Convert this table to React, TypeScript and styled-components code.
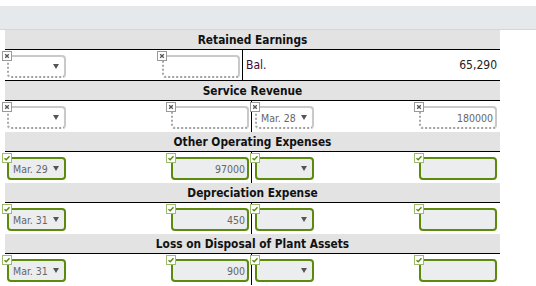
import React from "react";
import styled, { createGlobalStyle, css } from "styled-components";

const Global = createGlobalStyle`
  html, body { margin: 0; padding: 0; background: #fff; }
  body { font-family: "DejaVu Sans Condensed", "DejaVu Sans", sans-serif; }
`;

const Page = styled.div`
  width: 536px;
  height: 286px;
  overflow: hidden;
`;

const Band = styled.div`
  margin-top: 6px;
  height: 23px;
  background: #e6e9ec;
  border-bottom: 1px solid #d2d7dc;
`;

const Table = styled.div`
  margin-left: 5px;
  width: 495px;
  display: flex;
  flex-direction: column;
`;

const Header = styled.div`
  height: 19px;
  background: #e3e3e3;
  border-bottom: 1px solid #000;
  display: flex;
  align-items: center;
  justify-content: center;
  font-weight: bold;
  font-size: 11.8px;
  color: #111;
`;

const Row = styled.div<{ $leftW: number; $ruled?: boolean }>`
  display: grid;
  grid-template-columns: ${(p) => p.$leftW}px 1px 1fr;
  height: ${(p) => (p.$ruled ? 30 : 31)}px;
  ${(p) =>
    p.$ruled &&
    css`
      border-bottom: 1px solid #000;
    `}
`;

const Divider = styled.div`
  background: #000;
`;

const Cell = styled.div<{ $side: "l" | "r"; $center?: boolean }>`
  display: flex;
  justify-content: space-between;
  align-items: ${(p) => (p.$center ? "center" : "flex-start")};
  padding: ${(p) => (p.$center ? "0 2px 0 2px" : p.$side === "l" ? "5px 2px 0 2px" : "5px 3px 0 3px")};
`;

const Control = styled.div<{ $w: number; $ok: boolean; $select?: boolean }>`
  position: relative;
  box-sizing: border-box;
  width: ${(p) => p.$w}px;
  height: 23px;
  border-radius: 4px;
  display: flex;
  align-items: center;
  justify-content: ${(p) => (p.$select ? "space-between" : "flex-end")};
  padding: 0 ${(p) => (p.$select ? "5px" : "2px")} 0 4px;
  font-size: 10.5px;
  color: #666;
  ${(p) =>
    p.$ok
      ? css`
          border: 2px solid #5b8a0c;
          background: #ebedee;
        `
      : css`
          border: 2px solid #c9c9c9;
          border-left-style: dotted;
          border-bottom-style: dotted;
          border-left-color: #a8a8a8;
          border-bottom-color: #a0a0a0;
          background: #fff;
        `}
`;

const Arrow = styled.span`
  width: 0;
  height: 0;
  border-left: 3px solid transparent;
  border-right: 3px solid transparent;
  border-top: 5px solid #555;
`;

const Mark = styled.div<{ $ok: boolean }>`
  position: absolute;
  top: -6px;
  left: -7px;
  width: 10px;
  height: 10px;
  box-sizing: border-box;
  border: 1px solid ${(p) => (p.$ok ? "#9dbb6e" : "#9a9a9a")};
  background: #fff;
  display: flex;
  align-items: center;
  justify-content: center;
`;

const BalLabel = styled.span`
  font-size: 12px;
  color: #3b0a3b;
  padding-left: 1px;
`;

const BalValue = styled.span`
  font-size: 12px;
  color: #222;
  padding-right: 1px;
`;

const MarkIcon = ({ ok }: { ok: boolean }) => (
  <Mark $ok={ok}>
    {ok ? (
      <svg width="8" height="8" viewBox="0 0 8 8">
        <polyline points="1.5,4.2 3.2,5.8 6.5,2.2" fill="none" stroke="#5b8a0c" strokeWidth="1.4" />
      </svg>
    ) : (
      <svg width="8" height="8" viewBox="0 0 8 8">
        <path d="M2.2 2.2 L5.8 5.8 M5.8 2.2 L2.2 5.8" stroke="#555" strokeWidth="1.3" />
      </svg>
    )}
  </Mark>
);

type Entry = { ok: boolean; date: string; amount: string };

const Entries = ({ e, side }: { e: Entry; side: "l" | "r" }) => (
  <Cell $side={side}>
    <Control $w={59} $ok={e.ok} $select>
      <MarkIcon ok={e.ok} />
      <span>{e.date}</span>
      <Arrow />
    </Control>
    <Control $w={78} $ok={e.ok}>
      <MarkIcon ok={e.ok} />
      <span>{e.amount}</span>
    </Control>
  </Cell>
);

type Account = {
  title: string;
  leftW: number;
  left: Entry;
  right: Entry | { bal: string };
};

const accounts: Account[] = [
  {
    title: "Retained Earnings",
    leftW: 237,
    left: { ok: false, date: "", amount: "" },
    right: { bal: "65,290" },
  },
  {
    title: "Service Revenue",
    leftW: 246,
    left: { ok: false, date: "", amount: "" },
    right: { ok: false, date: "Mar. 28", amount: "180000" },
  },
  {
    title: "Other Operating Expenses",
    leftW: 246,
    left: { ok: true, date: "Mar. 29", amount: "97000" },
    right: { ok: true, date: "", amount: "" },
  },
  {
    title: "Depreciation Expense",
    leftW: 246,
    left: { ok: true, date: "Mar. 31", amount: "450" },
    right: { ok: true, date: "", amount: "" },
  },
  {
    title: "Loss on Disposal of Plant Assets",
    leftW: 246,
    left: { ok: true, date: "Mar. 31", amount: "900" },
    right: { ok: true, date: "", amount: "" },
  },
];

export default function App() {
  return (
    <Page>
      <Global />
      <Band />
      <Table>
        {accounts.map((a) => {
          const isBal = "bal" in a.right;
          return (
            <React.Fragment key={a.title}>
              <Header>{a.title}</Header>
              <Row $leftW={a.leftW} $ruled={isBal}>
                <Entries e={a.left} side="l" />
                <Divider />
                {"bal" in a.right ? (
                  <Cell $side="r" $center>
                    <BalLabel>Bal.</BalLabel>
                    <BalValue>{a.right.bal}</BalValue>
                  </Cell>
                ) : (
                  <Entries e={a.right} side="r" />
                )}
              </Row>
            </React.Fragment>
          );
        })}
      </Table>
    </Page>
  );
}
